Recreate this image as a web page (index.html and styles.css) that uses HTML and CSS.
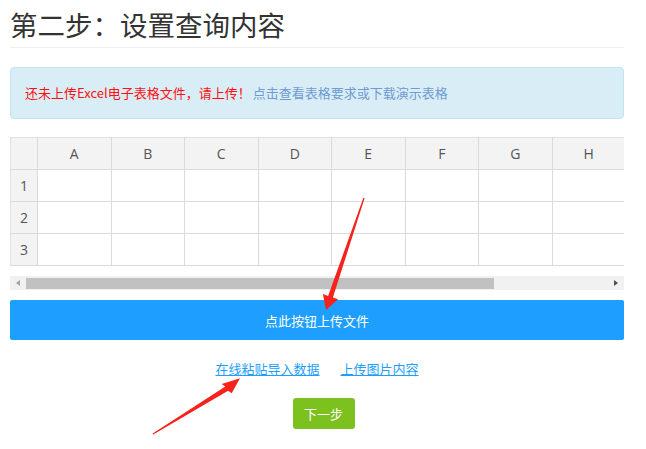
FILE: index.html
```html
<!DOCTYPE html>
<html lang="zh-CN">
<head>
<meta charset="utf-8">
<title>第二步：设置查询内容</title>
<link rel="stylesheet" href="styles.css">
</head>
<body>
<div class="page">
  <h1 class="title">第二步：设置查询内容</h1>
  <div class="alert">
    <span class="alert-warn">还未上传Excel电子表格文件，请上传！</span>
    <a class="alert-link" href="#">点击查看表格要求或下载演示表格</a>
  </div>
  <div class="sheet">
    <div class="sheet-view">
      <table class="grid">
        <colgroup>
          <col class="c-head"><col class="c"><col class="c"><col class="c"><col class="c"><col class="c"><col class="c"><col class="c"><col class="c"><col class="c">
        </colgroup>
        <thead>
          <tr><th></th><th>A</th><th>B</th><th>C</th><th>D</th><th>E</th><th>F</th><th>G</th><th>H</th><th></th></tr>
        </thead>
        <tbody>
          <tr><th>1</th><td></td><td></td><td></td><td></td><td></td><td></td><td></td><td></td><td></td></tr>
          <tr><th>2</th><td></td><td></td><td></td><td></td><td></td><td></td><td></td><td></td><td></td></tr>
          <tr><th>3</th><td></td><td></td><td></td><td></td><td></td><td></td><td></td><td></td><td></td></tr>
        </tbody>
      </table>
    </div>
    <div class="scrollbar">
      <span class="sb-btn sb-left"></span>
      <div class="sb-track"><div class="sb-thumb"></div></div>
      <span class="sb-btn sb-right"></span>
    </div>
  </div>
  <button class="upload-btn" type="button">点此按钮上传文件</button>
  <div class="links">
    <a href="#">在线粘贴导入数据</a>
    <a href="#">上传图片内容</a>
  </div>
  <div class="next-row">
    <button class="next-btn" type="button">下一步</button>
  </div>
</div>
<svg class="arrows" width="646" height="449" viewBox="0 0 646 449" aria-hidden="true">
  <polygon points="364.6,198.2 332.9,297.5 338.1,299.3 326,310 322.9,294.1 328.1,295.9 363.4,197.8"/>
  <polygon points="152.7,433.6 225.3,386.6 221.7,384 240,378.3 231.7,393.3 228.1,390.8 153.3,434.4"/>
</svg>
</body>
</html>
```

FILE: styles.css
```css
html, body {
  margin: 0;
  padding: 0;
  background: #fff;
}
body {
  font-family: "Noto Sans CJK SC", "Noto Sans", sans-serif;
  font-size: 13px;
  color: #333;
  position: relative;
  width: 646px;
  height: 449px;
  overflow: hidden;
}
.page {
  width: 614px;
  padding: 0 22px 0 10px;
}
.title {
  margin: 0;
  padding: 5px 0 3px;
  font-size: 27.5px;
  font-weight: normal;
  line-height: 39px;
  color: #333;
  border-bottom: 1px solid #eee;
}
.alert {
  margin-top: 19px;
  box-sizing: border-box;
  height: 52px;
  padding: 15px 14px;
  line-height: 20px;
  background: #d9edf7;
  border: 1px solid #c4e3f1;
  border-radius: 4px;
  display: flex;
  gap: 2px;
}
.alert-warn {
  color: #ff1010;
}
.alert-link {
  color: #6e9bd1;
  text-decoration: none;
}
.sheet {
  margin-top: 18px;
}
.sheet-view {
  overflow: hidden;
  width: 614px;
}
.grid {
  border-collapse: collapse;
  table-layout: fixed;
  width: 688.5px;
  font-family: "Open Sans", "Noto Sans", sans-serif;
  font-size: 14px;
  color: #555;
}
.c-head { width: 27px; }
.c { width: 73.5px; }
.grid th,
.grid td {
  border: 1px solid #dadada;
  height: 32px;
  padding: 0;
  box-sizing: border-box;
}
.grid th {
  background: #f3f3f3;
  font-weight: normal;
  text-align: center;
}
.grid tr:first-child th { border-top-color: #e2e2e2; }
.grid th:first-child { border-left-color: #e0e0e0; }
.grid td { background: #fff; }
.scrollbar {
  margin-top: 10px;
  height: 14px;
  display: flex;
  background: #f1f1f1;
}
.sb-btn {
  width: 16px;
  flex: none;
  display: flex;
  align-items: center;
  justify-content: center;
}
.sb-left::before {
  content: "";
  border-top: 3.5px solid transparent;
  border-bottom: 3.5px solid transparent;
  border-right: 4px solid #a3a3a3;
}
.sb-right::before {
  content: "";
  border-top: 3.5px solid transparent;
  border-bottom: 3.5px solid transparent;
  border-left: 4px solid #505050;
}
.sb-track {
  flex: 1;
  display: flex;
  align-items: center;
}
.sb-thumb {
  width: 468px;
  height: 11px;
  background: #c1c1c1;
}
.upload-btn {
  display: block;
  margin-top: 10px;
  width: 100%;
  height: 40px;
  border: none;
  border-radius: 2px;
  background: #1e9fff;
  color: #fff;
  font-family: "Noto Sans CJK SC", "Noto Sans", sans-serif;
  font-size: 13px;
  padding: 0;
}
.links {
  margin-top: 19px;
  display: flex;
  justify-content: center;
  gap: 21px;
  line-height: 20px;
}
.links a {
  color: #1e9fff;
  text-decoration: underline;
}
.next-row {
  margin-top: 19px;
  display: flex;
  justify-content: center;
  padding-left: 13px;
}
.next-btn {
  height: 31px;
  width: 62px;
  padding: 0;
  border: none;
  border-radius: 3px;
  background: #7dc11f;
  color: #fff;
  font-family: "Noto Sans CJK SC", "Noto Sans", sans-serif;
  font-size: 13px;
}
.arrows {
  position: absolute;
  left: 0;
  top: 0;
  pointer-events: none;
}
.arrows polygon {
  fill: #f5231c;
}
```
